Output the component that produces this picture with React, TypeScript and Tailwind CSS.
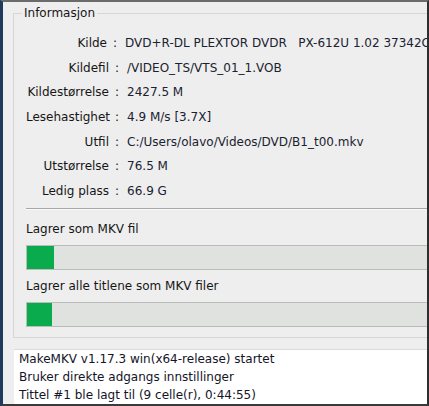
import React from "react";

const rows: [string, string][] = [
  ["Kilde", "DVD+R-DL PLEXTOR DVDR   PX-612U 1.02 37342C"],
  ["Kildefil", "/VIDEO_TS/VTS_01_1.VOB"],
  ["Kildestørrelse", "2427.5 M"],
  ["Lesehastighet", "4.9 M/s [3.7X]"],
  ["Utfil", "C:/Users/olavo/Videos/DVD/B1_t00.mkv"],
  ["Utstørrelse", "76.5 M"],
  ["Ledig plass", "66.9 G"],
];

function Bar({ fill }: { fill: number }) {
  return (
    <div className="h-[25px] border border-[#b9bcb9] bg-[#e0e2e0] mr-[-4px]">
      <div className="h-full bg-[#0aab4c]" style={{ width: fill }} />
    </div>
  );
}

export default function App() {
  return (
    <div
      className="w-[429px] h-[406px] overflow-hidden bg-[#eeeeee] border-l-[3px] border-l-[#1e3a5c] border-t-[2px] border-t-[#6b6b6b] border-r-[2px] border-r-[#2e2e2e] border-b-[2px] border-b-[#3a3a3a] text-[12px] text-[#161616] flex flex-col"
      style={{ fontFamily: '"DejaVu Sans", Verdana, sans-serif' }}
    >
      <div className="relative ml-[10px] mt-[11px] mr-[-4px] border border-[#d6d6d6] pl-[12px] pr-0 pt-[17px] pb-[10px]">
        <span className="absolute left-[8px] top-[-10px] bg-[#eeeeee] px-[2px] leading-[18px]">
          Informasjon
        </span>
        <div className="flex flex-col">
          {rows.map(([k, v]) => (
            <div key={k} className="h-[24.6px] flex items-center whitespace-pre leading-[18px]">
              <span className="w-[83px] text-right">{k}</span>
              <span className="ml-[6px]">:</span>
              <span className="ml-[8px] text-[#1a2230]">{v}</span>
            </div>
          ))}
        </div>
        <div className="mt-[5px] border-t border-t-[#a8a8a8] border-b border-b-[#fafafa]" />
        <div className="mt-[10px] leading-[18px]">Lagrer som MKV fil</div>
        <div className="mt-[7px]">
          <Bar fill={27} />
        </div>
        <div className="mt-[7px] leading-[18px]">Lagrer alle titlene som MKV filer</div>
        <div className="mt-[7px]">
          <Bar fill={25} />
        </div>
      </div>
      <div className="ml-[11px] mt-[11px] flex-1 bg-white border-t border-t-[#dadada] pl-[5px] leading-[18px] text-[#141428] whitespace-pre">
        <div>MakeMKV v1.17.3 win(x64-release) startet</div>
        <div>Bruker direkte adgangs innstillinger</div>
        <div>Tittel #1 ble lagt til (9 celle(r), 0:44:55)</div>
      </div>
    </div>
  );
}
